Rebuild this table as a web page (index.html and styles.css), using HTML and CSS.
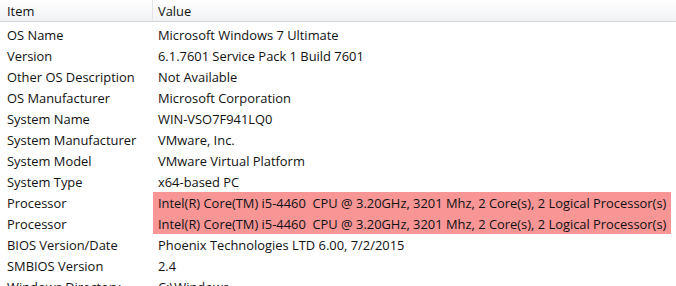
FILE: index.html
```html
<!DOCTYPE html>
<html>
<head>
<meta charset="utf-8">
<link rel="stylesheet" href="styles.css">
</head>
<body>
<div class="list">
  <div class="header">
    <div class="hcell item">Item</div>
    <div class="hcell value">Value</div>
  </div>
  <div class="rows">
    <div class="row"><div class="c1">OS Name</div><div class="c2">Microsoft Windows 7 Ultimate</div></div>
    <div class="row"><div class="c1">Version</div><div class="c2">6.1.7601 Service Pack 1 Build 7601</div></div>
    <div class="row"><div class="c1">Other OS Description</div><div class="c2">Not Available</div></div>
    <div class="row"><div class="c1">OS Manufacturer</div><div class="c2">Microsoft Corporation</div></div>
    <div class="row"><div class="c1">System Name</div><div class="c2">WIN-VSO7F941LQ0</div></div>
    <div class="row"><div class="c1">System Manufacturer</div><div class="c2">VMware, Inc.</div></div>
    <div class="row"><div class="c1">System Model</div><div class="c2">VMware Virtual Platform</div></div>
    <div class="row"><div class="c1">System Type</div><div class="c2">x64-based PC</div></div>
    <div class="row"><div class="c1">Processor</div><div class="c2 hlcell"><span class="hl">Intel(R) Core(TM) i5-4460&nbsp; CPU @ 3.20GHz, 3201 Mhz, 2 Core(s), 2 Logical Processor(s)</span></div></div>
    <div class="row"><div class="c1">Processor</div><div class="c2 hlcell"><span class="hl">Intel(R) Core(TM) i5-4460&nbsp; CPU @ 3.20GHz, 3201 Mhz, 2 Core(s), 2 Logical Processor(s)</span></div></div>
    <div class="row"><div class="c1">BIOS Version/Date</div><div class="c2">Phoenix Technologies LTD 6.00, 7/2/2015</div></div>
    <div class="row"><div class="c1">SMBIOS Version</div><div class="c2">2.4</div></div>
    <div class="row"><div class="c1">Windows Directory</div><div class="c2">C:\Windows</div></div>
  </div>
</div>
</body>
</html>
```
FILE: styles.css
```css
html, body {
  margin: 0;
  padding: 0;
  background: #fff;
}
body {
  font-family: "Open Sans", "Noto Sans", sans-serif;
  font-size: 12.9px;
  color: #111;
  overflow: hidden;
  width: 676px;
  height: 286px;
}
.list {
  display: flex;
  flex-direction: column;
}
.header {
  display: flex;
  height: 21px;
  border-bottom: 1px solid #d5d5d5;
  background: linear-gradient(#ffffff, #f1f2f4);
}
.hcell {
  display: flex;
  align-items: center;
  padding-left: 7px;
}
.hcell.item {
  width: 145px;
  border-right: 1px solid #e3e4e6;
}
.hcell.value {
  padding-left: 5px;
  flex: 1;
}
.rows {
  display: flex;
  flex-direction: column;
  padding-top: 2px;
}
.row {
  display: flex;
  height: 21px;
}
.c1 {
  width: 146px;
  padding-left: 7px;
  display: flex;
  align-items: center;
}
.c2 {
  flex: 1;
  display: flex;
  align-items: center;
  padding-left: 5px;
}
.c2.hlcell {
  align-items: stretch;
  padding-left: 0;
}
.hl {
  display: flex;
  align-items: center;
  background: #f89696;
  padding: 0 5px 0 5px;
}
```
